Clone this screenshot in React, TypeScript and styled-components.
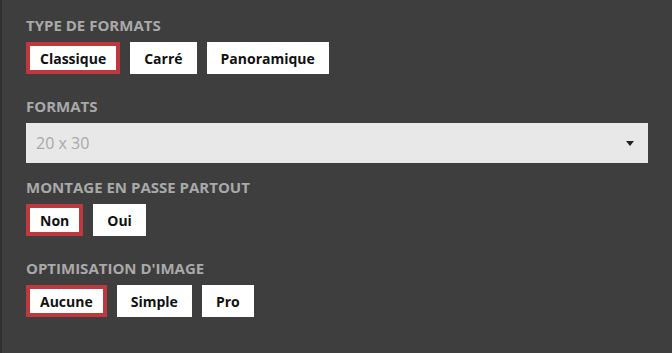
import styled, { createGlobalStyle } from 'styled-components';

const GlobalStyle = createGlobalStyle`
  html, body {
    margin: 0;
    padding: 0;
    background: #3e3e3e;
  }
  body {
    font-family: "Open Sans", "Liberation Sans", sans-serif;
  }
`;

const Panel = styled.div`
  width: 672px;
  height: 353px;
  box-sizing: border-box;
  background: #3e3e3e;
  border-left: 2px solid #2d3134;
  padding: 15px 24px 0 24px;
`;

const Section = styled.section<{ $gap: number }>`
  margin-bottom: ${(p) => p.$gap}px;
`;

const Heading = styled.h3`
  margin: 0 0 7px;
  font-size: 15px;
  line-height: 20px;
  font-weight: 700;
  color: #a9a9a9;
  text-transform: uppercase;
`;

const OptionRow = styled.div`
  display: flex;
  gap: 10px;
`;

const Option = styled.button<{ $active?: boolean }>`
  height: 32px;
  box-sizing: border-box;
  padding: 0 10px;
  background: #fff;
  border: 4px solid ${(p) => (p.$active ? '#bd393d' : '#fff')};
  border-radius: 0;
  font-family: "Open Sans", "Liberation Sans", sans-serif;
  font-size: 14px;
  font-weight: 700;
  color: #111;
  cursor: pointer;
`;

const Select = styled.div`
  height: 40px;
  display: flex;
  align-items: center;
  justify-content: space-between;
  padding: 0 14px 0 10px;
  background: #e8e8e8;
  font-size: 16px;
  color: #a9a9a9;
`;

const Caret = styled.span`
  width: 0;
  height: 0;
  border-left: 4px solid transparent;
  border-right: 4px solid transparent;
  border-top: 5px solid #222;
`;

const App = () => {
  return (
    <>
      <GlobalStyle />
      <Panel>
        <Section $gap={22}>
          <Heading>Type de formats</Heading>
          <OptionRow>
            <Option $active>Classique</Option>
            <Option>Carré</Option>
            <Option>Panoramique</Option>
          </OptionRow>
        </Section>
        <Section $gap={14}>
          <Heading>Formats</Heading>
          <Select>
            <span>20 x 30</span>
            <Caret />
          </Select>
        </Section>
        <Section $gap={22}>
          <Heading>Montage en passe partout</Heading>
          <OptionRow>
            <Option $active>Non</Option>
            <Option>Oui</Option>
          </OptionRow>
        </Section>
        <Section $gap={0}>
          <Heading>Optimisation d'image</Heading>
          <OptionRow>
            <Option $active>Aucune</Option>
            <Option>Simple</Option>
            <Option>Pro</Option>
          </OptionRow>
        </Section>
      </Panel>
    </>
  );
};

export default App;
